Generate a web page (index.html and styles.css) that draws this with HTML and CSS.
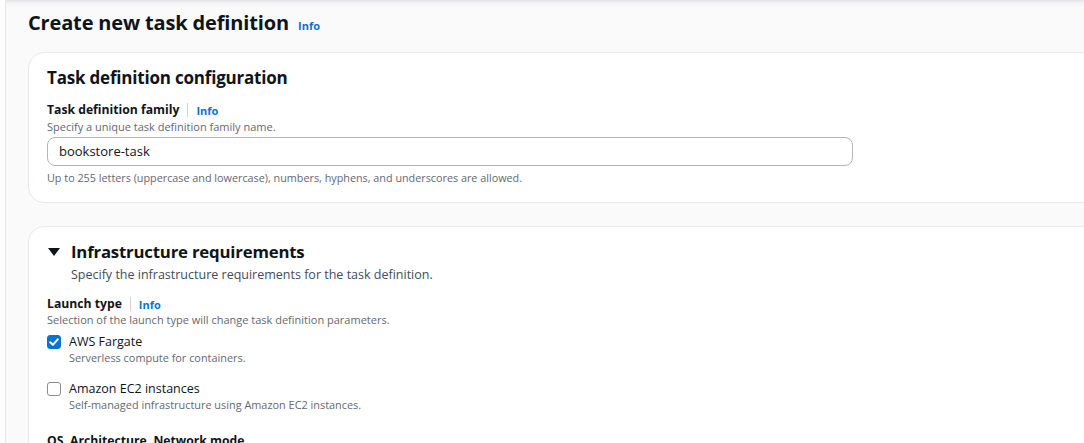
FILE: index.html
```html
<!DOCTYPE html>
<html lang="en">
<head>
<meta charset="utf-8">
<title>Create new task definition</title>
<link rel="stylesheet" href="styles.css">
</head>
<body>
<div class="page">
  <div class="content">
    <h1 class="page-title">Create new task definition <a class="info" href="#">Info</a></h1>

    <section class="card card-config">
      <h2 class="card-title">Task definition configuration</h2>
      <div class="field">
        <div class="label-row"><span class="label">Task definition family</span><span class="sep"></span><a class="info" href="#">Info</a></div>
        <div class="desc">Specify a unique task definition family name.</div>
        <div class="input">bookstore-task</div>
        <div class="hint">Up to 255 letters (uppercase and lowercase), numbers, hyphens, and underscores are allowed.</div>
      </div>
    </section>

    <section class="card card-infra">
      <div class="exp-header">
        <svg class="caret" width="12" height="8" viewBox="0 0 12 8"><path d="M0 0 H12 L6 8 Z" fill="#0f141a"/></svg>
        <h2 class="card-title">Infrastructure requirements</h2>
      </div>
      <div class="exp-desc">Specify the infrastructure requirements for the task definition.</div>

      <div class="field field-launch">
        <div class="label-row"><span class="label">Launch type</span><span class="sep"></span><a class="info" href="#">Info</a></div>
        <div class="desc">Selection of the launch type will change task definition parameters.</div>
        <div class="check-list">
          <div class="check-item">
            <span class="box checked"><svg width="14" height="14" viewBox="0 0 14 14"><path d="M3.2 7.2 L5.9 9.8 L10.8 4.4" fill="none" stroke="#fff" stroke-width="2" stroke-linecap="round" stroke-linejoin="round"/></svg></span>
            <div class="check-text">
              <div class="check-label">AWS Fargate</div>
              <div class="check-desc">Serverless compute for containers.</div>
            </div>
          </div>
          <div class="check-item">
            <span class="box"></span>
            <div class="check-text">
              <div class="check-label">Amazon EC2 instances</div>
              <div class="check-desc">Self-managed infrastructure using Amazon EC2 instances.</div>
            </div>
          </div>
        </div>
      </div>

      <div class="field field-os">
        <div class="label-row"><span class="label">OS, Architecture, Network mode</span></div>
      </div>
    </section>
  </div>
</div>
</body>
</html>
```

FILE: styles.css
```css
html, body {
  margin: 0;
  padding: 0;
  background: #fdfdfd;
  overflow: hidden;
  height: 443px;
}
body {
  font-family: "Open Sans", "Noto Sans", Arial, sans-serif;
  color: #0f141a;
}
.page {
  margin-left: 5px;
  border-left: 1px solid #e6e6ea;
  background: linear-gradient(#e4e4e8 0px, #f3f3f5 3px, #fafafa 7px, #fafafa 100%);
  min-height: 443px;
  padding-left: 22px;
}
.content {
  width: 1100px;
  padding-top: 9px;
}
.page-title {
  margin: 0;
  font-size: 20px;
  line-height: 28px;
  font-weight: 700;
  letter-spacing: -0.15px;
}
.info {
  color: #0972d3;
  font-size: 11px;
  font-weight: 700;
  text-decoration: none;
  letter-spacing: 0;
}
.page-title .info {
  margin-left: 4px;
}
.card {
  background: #fff;
  border: 1px solid #e9e9ec;
  border-radius: 16px;
  padding: 14px 18px 16px;
}
.card-config {
  margin-top: 12px;
}
.card-infra {
  margin-top: 23px;
  padding-top: 13px;
  padding-bottom: 40px;
}
.card-title {
  margin: 0;
  font-size: 17px;
  line-height: 22px;
  font-weight: 700;
  letter-spacing: -0.2px;
}
.field {
  margin-top: 12px;
}
.label-row {
  display: flex;
  align-items: center;
  height: 18px;
}
.label {
  font-size: 12.2px;
  font-weight: 700;
  line-height: 18px;
}
.sep {
  width: 1px;
  height: 14px;
  background: #d1d1d6;
  margin: 0 8px;
}
.desc, .hint, .check-desc {
  font-size: 11px;
  line-height: 16px;
  color: #656871;
}
.hint {
  font-size: 10.8px;
  margin-top: 4px;
}
.check-desc {
  font-size: 10.9px;
}
.input {
  margin-top: 2px;
  width: 782px;
  height: 27px;
  border: 1px solid #b4b4bb;
  border-radius: 8px;
  padding: 0 11px;
  font-size: 13px;
  line-height: 27px;
  color: #0f141a;
}
.exp-header {
  display: flex;
  align-items: center;
  height: 24px;
}
.caret {
  margin-left: 1px;
  margin-right: 11px;
  flex: none;
}
.card-infra .card-title {
  font-size: 16.8px;
  line-height: 24px;
}
.exp-desc {
  margin-left: 24px;
  margin-top: 2px;
  font-size: 12.5px;
  line-height: 18px;
  color: #414d5c;
}
.field-launch {
  margin-top: 12px;
}
.field-launch .label-row {
  height: 16px;
}
.check-list {
  margin-top: 6px;
  display: flex;
  flex-direction: column;
  gap: 15px;
}
.check-item {
  display: flex;
  align-items: flex-start;
}
.box {
  flex: none;
  width: 14px;
  height: 14px;
  box-sizing: border-box;
  border: 1.5px solid #8c8c94;
  border-radius: 3px;
  margin-top: 1px;
  margin-right: 8px;
  background: #fff;
}
.box.checked {
  background: #0972d3;
  border-color: #0972d3;
  position: relative;
}
.box.checked svg {
  position: absolute;
  left: -1.5px;
  top: -1.5px;
}
.check-label {
  font-size: 12.5px;
  line-height: 16px;
}
.field-os {
  margin-top: 19px;
}
```
